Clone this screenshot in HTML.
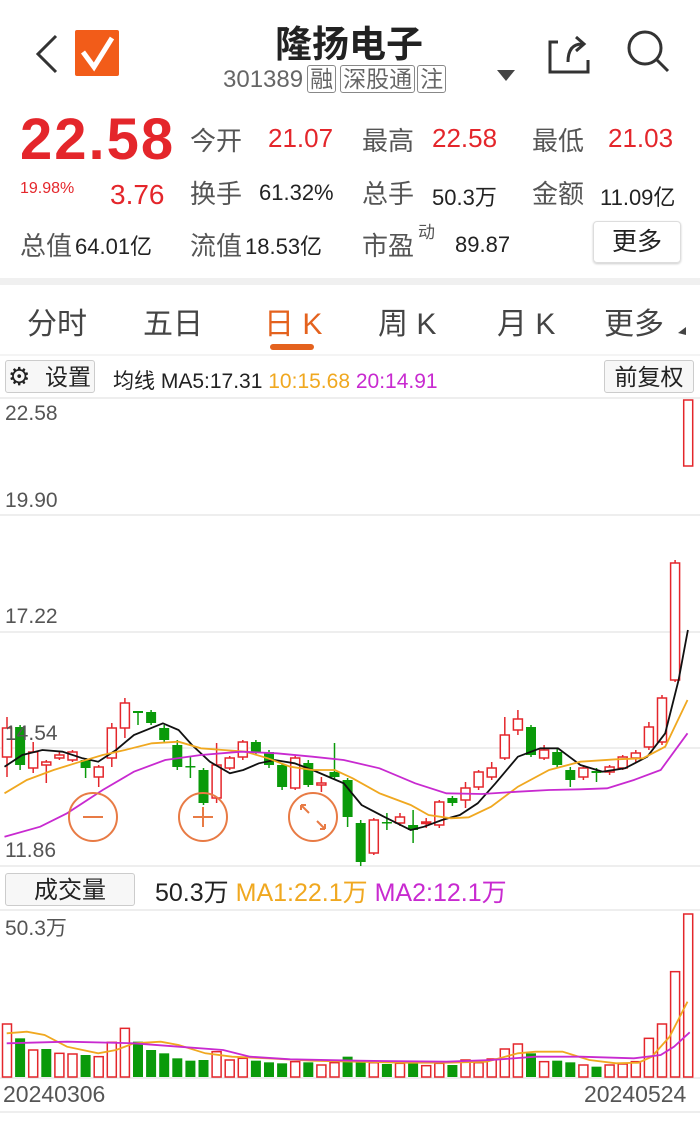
<!DOCTYPE html>
<html><head><meta charset="utf-8"><style>
body{margin:0;width:700px;height:1124px;background:#fff;font-family:"Liberation Sans","Noto Sans CJK SC",sans-serif;position:relative;overflow:hidden}
.a{position:absolute;white-space:nowrap}
.r{color:#e4262b}.g{color:#555}.k{color:#222}
.tag{border:1.5px solid #888;border-radius:3px;padding:0 2px;font-size:23px;color:#666;margin-left:4px}
.l{font-size:26px;color:#555}
.v{font-size:26px;color:#e4262b}
.n{font-size:22px;color:#222}
</style></head><body>
<svg class="a" style="left:0;top:0" width="700" height="1124">
<polyline points="56,36 38,54 56,72" fill="none" stroke="#333" stroke-width="3"/>
<rect x="75" y="30" width="44" height="46" fill="#f25c19" rx="2"/>
<polyline points="83,52 94,67 112,38" fill="none" stroke="#fff" stroke-width="5"/>
<path d="M558,42 H550 V72 H588 V60 M568,62 Q568,44 582,44 M576,37 L584,44 L576,51" fill="none" stroke="#333" stroke-width="3"/>
<circle cx="645" cy="48" r="16" fill="none" stroke="#333" stroke-width="3"/>
<line x1="657" y1="60" x2="668" y2="71" stroke="#333" stroke-width="3"/>
<polygon points="497,70 515,70 506,81" fill="#444"/>
<rect x="0" y="278" width="700" height="7" fill="#f0f0f0"/>
<rect x="270" y="344" width="44" height="6" rx="3" fill="#e4621e"/>
<polygon points="678,333 686,327 686,335" fill="#444"/>
<line x1="0" y1="355" x2="700" y2="355" stroke="#e8e8e8"/>
<line x1="0" y1="398" x2="700" y2="398" stroke="#ddd"/>
<line x1="0" y1="515" x2="700" y2="515" stroke="#ddd"/>
<line x1="0" y1="632" x2="700" y2="632" stroke="#ddd"/>
<line x1="0" y1="748" x2="700" y2="748" stroke="#ddd"/>
<line x1="0" y1="866" x2="700" y2="866" stroke="#ddd"/>
<line x1="0" y1="910" x2="700" y2="910" stroke="#ddd"/>
<line x1="0" y1="1078" x2="700" y2="1078" stroke="#ddd"/>
<line x1="0" y1="1112" x2="700" y2="1112" stroke="#ddd"/>
<g id="c"></g>
<g fill="none" stroke="#e87b45" stroke-width="2">
<circle cx="93" cy="817" r="24"/><line x1="83" y1="817" x2="103" y2="817"/>
<circle cx="203" cy="817" r="24"/><line x1="193" y1="817" x2="213" y2="817"/><line x1="203" y1="807" x2="203" y2="827"/>
<circle cx="313" cy="817" r="24"/><path d="M301,805 L309,813 M301,805 h5 M301,805 v5 M325,829 L317,821 M325,829 h-5 M325,829 v-5"/>
</g>
</svg>
<div class="a k" style="left:275px;top:14px;font-size:37px;font-weight:bold">隆扬电子</div>
<div class="a" style="left:223px;top:60px;font-size:24px;color:#666">301389<span class="tag">融</span><span class="tag">深股通</span><span class="tag" style="margin-left:2px">注</span></div>
<div class="a r" style="left:20px;top:106px;font-size:58px;font-weight:bold;letter-spacing:2px">22.58</div>
<div class="a l" style="left:190px;top:121px">今开</div><div class="a v" style="left:268px;top:123px">21.07</div>
<div class="a l" style="left:362px;top:121px">最高</div><div class="a v" style="left:432px;top:123px">22.58</div>
<div class="a l" style="left:532px;top:121px">最低</div><div class="a v" style="left:608px;top:123px">21.03</div>
<div class="a r" style="left:20px;top:180px;font-size:16px">19.98%</div>
<div class="a r" style="left:110px;top:179px;font-size:28px">3.76</div>
<div class="a l" style="left:190px;top:174px">换手</div><div class="a n" style="left:259px;top:180px">61.32%</div>
<div class="a l" style="left:362px;top:174px">总手</div><div class="a n" style="left:432px;top:180px">50.3万</div>
<div class="a l" style="left:532px;top:174px">金额</div><div class="a n" style="left:600px;top:180px">11.09亿</div>
<div class="a l" style="left:20px;top:226px">总值</div><div class="a n" style="left:75px;top:229px">64.01亿</div>
<div class="a l" style="left:190px;top:226px">流值</div><div class="a n" style="left:245px;top:229px">18.53亿</div>
<div class="a l" style="left:362px;top:226px">市盈</div>
<div class="a g" style="left:418px;top:218px;font-size:17px">动</div>
<div class="a n" style="left:455px;top:232px">89.87</div>
<div class="a k" style="left:593px;top:221px;width:86px;height:40px;border:1px solid #ddd;border-radius:4px;font-size:25px;text-align:center;line-height:40px;box-shadow:0 1px 2px #ccc">更多</div>
<div class="a" style="left:27px;top:299px;font-size:30px;color:#444">分时</div>
<div class="a" style="left:143px;top:299px;font-size:30px;color:#444">五日</div>
<div class="a" style="left:264px;top:299px;font-size:30px;color:#e4621e">日 K</div>
<div class="a" style="left:378px;top:299px;font-size:30px;color:#444">周 K</div>
<div class="a" style="left:497px;top:299px;font-size:30px;color:#444">月 K</div>
<div class="a" style="left:604px;top:299px;font-size:30px;color:#444">更多</div>
<div class="a k" style="left:5px;top:360px;width:90px;height:33px;border:1px solid #ccc;border-radius:3px;background:#f7f7f7;font-size:23px;line-height:33px;text-align:right;box-sizing:border-box;padding-right:3px">设置</div>
<div class="a k" style="left:8px;top:362px;font-size:25px">⚙</div>
<div class="a" style="left:113px;top:365px;font-size:21px"><span class="k">均线 MA5:17.31</span> <span style="color:#f0a820">10:15.68</span> <span style="color:#c82ad0">20:14.91</span></div>
<div class="a k" style="left:604px;top:360px;width:90px;height:33px;border:1px solid #ccc;border-radius:3px;background:#f7f7f7;font-size:23px;line-height:33px;text-align:center;box-sizing:border-box">前复权</div>
<div class="a g" style="left:5px;top:402px;font-size:21px">22.58</div>
<div class="a g" style="left:5px;top:489px;font-size:21px">19.90</div>
<div class="a g" style="left:5px;top:605px;font-size:21px">17.22</div>
<div class="a g" style="left:5px;top:722px;font-size:21px">14.54</div>
<div class="a g" style="left:5px;top:839px;font-size:21px">11.86</div>
<div class="a k" style="left:5px;top:873px;width:130px;height:33px;border:1px solid #ccc;border-radius:3px;background:#f7f7f7;font-size:24px;line-height:33px;text-align:center;box-sizing:border-box">成交量</div>
<div class="a" style="left:155px;top:873px;font-size:25px"><span class="k">50.3万</span> <span style="color:#f0a820">MA1:22.1万</span> <span style="color:#c82ad0">MA2:12.1万</span></div>
<div class="a g" style="left:5px;top:912px;font-size:21px">50.3万</div>
<div class="a g" style="left:3px;top:1081px;font-size:23px">20240306</div>
<div class="a g" style="left:584px;top:1081px;font-size:23px">20240524</div>
<script>
var C=[[1,728,757,717,777],[0,727,765,725,770],[1,752,768,742,773],[1,762,765,760,783],[1,755,758,752,760],[1,752,760,750,762],[0,760,768,758,778],[1,767,777,765,787],[1,728,758,723,767],[1,703,728,698,738],[0,711,713,711,725],[0,712,723,710,725],[0,728,740,725,742],[0,745,767,740,770],[0,766,767,757,778],[0,770,803,768,805],[1,765,798,743,803],[1,758,768,756,770],[1,742,757,740,760],[0,742,752,740,754],[0,752,765,750,768],[0,765,787,763,790],[1,758,788,756,790],[0,763,785,760,787],[1,783,785,777,792],[0,772,777,743,780],[0,780,817,778,827],[0,823,862,820,866],[1,820,853,818,855],[0,822,823,813,830],[1,817,823,813,826],[0,825,830,810,843],[1,822,823,818,828],[1,802,825,800,828],[0,798,803,796,806],[1,788,800,782,808],[1,772,787,770,790],[1,768,777,762,780],[1,735,758,717,760],[1,719,730,710,735],[0,727,755,725,757],[1,750,758,745,760],[0,752,765,748,768],[0,770,780,767,787],[1,768,777,765,780],[0,771,773,768,782],[1,767,772,765,775],[1,757,768,755,770],[1,753,758,750,762],[1,727,747,722,750],[1,698,742,695,745],[1,563,680,560,682],[1,400,466,400,466]];
var V=[[1,462],[0,505],[1,540],[0,537],[1,550],[1,552],[0,555],[1,560],[1,517],[1,475],[0,515],[0,540],[0,550],[0,565],[0,572],[0,570],[1,545],[1,570],[1,565],[0,572],[0,577],[0,580],[1,575],[0,577],[1,585],[1,578],[0,560],[0,575],[1,578],[0,582],[1,580],[0,580],[1,587],[1,580],[0,585],[1,570],[1,578],[1,567],[1,537],[1,522],[0,550],[1,575],[0,572],[0,577],[1,585],[0,590],[1,585],[1,582],[1,575],[1,505],[1,462],[1,305],[1,132]];
var s='',R='#e4262b',G='#0a9a0a';
C.forEach(function(c,i){var x=7+13.1*i,col=c[0]?R:G,t=Math.min(c[1],c[2]),h=Math.max(Math.abs(c[2]-c[1]),1.5);
s+='<line x1="'+x+'" y1="'+c[3]+'" x2="'+x+'" y2="'+c[4]+'" stroke="'+col+'" stroke-width="1.5"/>';
s+=c[0]?'<rect x="'+(x-4.5)+'" y="'+t+'" width="9" height="'+h+'" fill="#fff" stroke="'+R+'" stroke-width="1.5"/>':'<rect x="'+(x-5)+'" y="'+t+'" width="10" height="'+h+'" fill="'+G+'"/>';});
V.forEach(function(v,i){var x=7+13.1*i,y=870+v[1]/3;s+=v[0]?'<rect x="'+(x-4.5)+'" y="'+y+'" width="9" height="'+(1077-y)+'" fill="none" stroke="'+R+'" stroke-width="1.5"/>':'<rect x="'+(x-5)+'" y="'+y+'" width="10" height="'+(1077-y)+'" fill="'+G+'"/>';});
function P(a,col,ox,oy){var p=[];for(var i=0;i<a.length;i+=2)p.push((a[i]/2.24).toFixed(1)+','+(oy+a[i+1]/3).toFixed(1));return '<polyline points="'+p.join(' ')+'" fill="none" stroke="'+col+'" stroke-width="1.8"/>';}
s+=P([10,260,50,225,95,210,140,215,185,235,220,245,260,210,300,165,365,130,400,150,430,195,470,245,515,280,545,270,580,250,615,240,660,250,700,270,770,310,810,375,860,410,920,450,950,440,990,420,1030,405,1070,370,1110,310,1160,230,1210,205,1250,205,1300,255,1350,275,1400,265,1450,230,1490,160,1520,0,1541,-150],'#111',0,680);
s+=P([10,340,60,300,120,270,180,245,230,225,280,210,340,190,400,185,450,205,500,210,550,215,600,235,650,260,700,270,750,270,790,295,850,340,920,375,960,405,1010,415,1050,412,1100,380,1160,320,1230,270,1300,245,1380,238,1440,235,1490,200,1540,60],'#f0a820',0,680);
s+=P([10,470,90,440,150,400,230,330,300,275,370,240,450,225,540,215,620,220,700,230,770,240,850,265,930,310,1000,340,1080,342,1160,335,1230,330,1300,328,1360,325,1420,300,1480,270,1540,160],'#c82ad0',0,680);
s+=P([15,490,60,485,100,495,150,530,220,550,260,540,300,520,360,515,400,525,460,550,520,560,600,565,700,572,800,575,900,578,1000,578,1090,575,1160,550,1200,545,1260,545,1320,570,1380,580,1430,578,1460,560,1500,500,1540,395],'#f0a820',0,870);
s+=P([15,520,150,515,300,520,400,530,500,540,560,560,650,568,800,572,1000,575,1100,570,1200,560,1300,560,1420,565,1480,555,1510,530,1545,487],'#c82ad0',0,870);
document.getElementById('c').innerHTML=s;
</script>
</body></html>
